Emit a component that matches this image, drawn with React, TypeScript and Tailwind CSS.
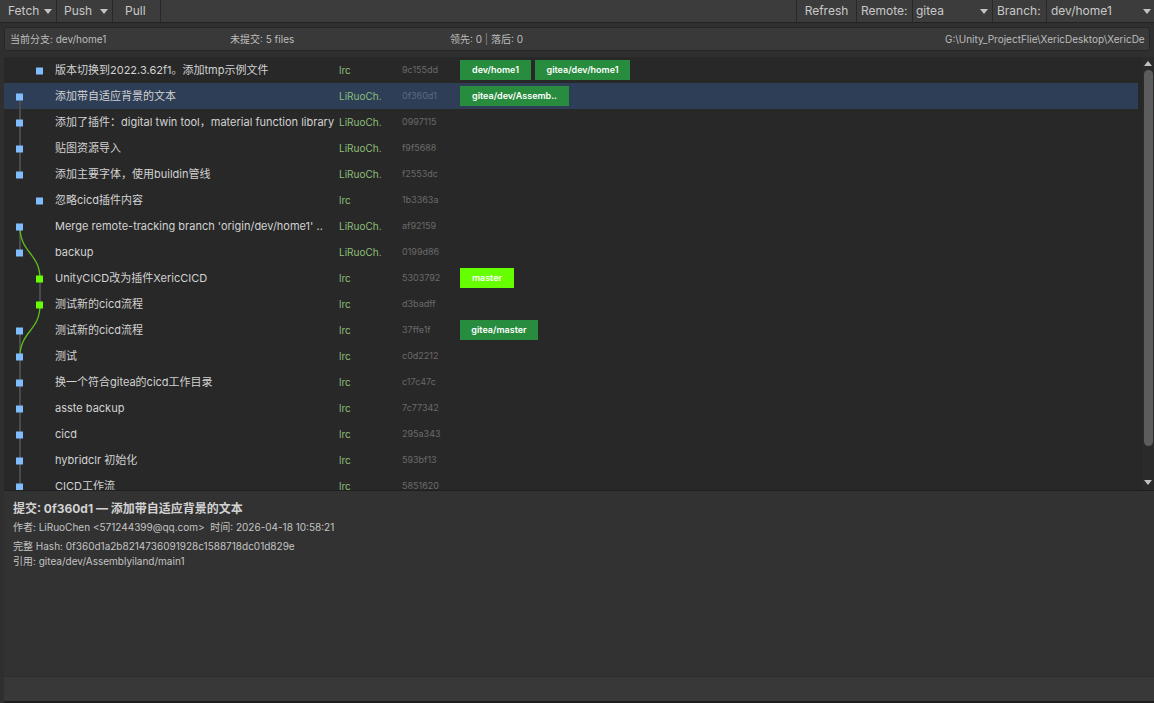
import React from 'react';

type Commit = {
    msg: string;
    author: string;
    hash: string;
    lane: 0 | 1;
    green?: boolean;
    tags?: { label: string; w: string; bright?: boolean }[];
};

const commits: Commit[] = [
    { msg: '版本切换到2022.3.62f1。添加tmp示例文件', author: 'lrc', hash: '9c155dd', lane: 1, tags: [{ label: 'dev/home1', w: 'w-[71px]' }, { label: 'gitea/dev/home1', w: 'w-[95px]' }] },
    { msg: '添加带自适应背景的文本', author: 'LiRuoCh.', hash: '0f360d1', lane: 0, tags: [{ label: 'gitea/dev/Assemb..', w: 'w-[109px]' }] },
    { msg: '添加了插件：digital twin tool，material function library', author: 'LiRuoCh.', hash: '0997115', lane: 0 },
    { msg: '贴图资源导入', author: 'LiRuoCh.', hash: 'f9f5688', lane: 0 },
    { msg: '添加主要字体，使用buildin管线', author: 'LiRuoCh.', hash: 'f2553dc', lane: 0 },
    { msg: '忽略cicd插件内容', author: 'lrc', hash: '1b3363a', lane: 1 },
    { msg: "Merge remote-tracking branch 'origin/dev/home1' ..", author: 'LiRuoCh.', hash: 'af92159', lane: 0 },
    { msg: 'backup', author: 'LiRuoCh.', hash: '0199d86', lane: 0 },
    { msg: 'UnityCICD改为插件XericCICD', author: 'lrc', hash: '5303792', lane: 1, green: true, tags: [{ label: 'master', w: 'w-[54px]', bright: true }] },
    { msg: '测试新的cicd流程', author: 'lrc', hash: 'd3badff', lane: 1, green: true },
    { msg: '测试新的cicd流程', author: 'lrc', hash: '37ffe1f', lane: 0, tags: [{ label: 'gitea/master', w: 'w-[78px]' }] },
    { msg: '测试', author: 'lrc', hash: 'c0d2212', lane: 0 },
    { msg: '换一个符合gitea的cicd工作目录', author: 'lrc', hash: 'c17c47c', lane: 0 },
    { msg: 'asste backup', author: 'lrc', hash: '7c77342', lane: 0 },
    { msg: 'cicd', author: 'lrc', hash: '295a343', lane: 0 },
    { msg: 'hybridclr 初始化', author: 'lrc', hash: '593bf13', lane: 0 },
    { msg: 'CICD工作流', author: 'lrc', hash: '5851620', lane: 0 },
];

const font = { fontFamily: "Inter, 'Noto Sans CJK SC', sans-serif" };

function Caret() {
    return (
        <svg width="8" height="5" viewBox="0 0 8 5" className="shrink-0">
            <path d="M0 0 L8 0 L4 5 Z" fill="#c4c4c4" />
        </svg>
    );
}

function Graph() {
    const cy = (i: number) => 14 + i * 26;
    const lx = (l: number) => (l === 0 ? 15.5 : 35.5);
    return (
        <svg className="absolute left-0 top-0 pointer-events-none" width="50" height="460">
            <line x1="16" y1={cy(1)} x2="16" y2={cy(4)} stroke="#4a4a4a" strokeWidth="2" />
            <line x1="16" y1={cy(6)} x2="16" y2={cy(7)} stroke="#4a4a4a" strokeWidth="2" />
            <line x1="36" y1={cy(8)} x2="36" y2={cy(9)} stroke="#4a4a4a" strokeWidth="2" />
            <line x1="16" y1={cy(10)} x2="16" y2={460} stroke="#4a4a4a" strokeWidth="2" />
            <path d={`M16 ${cy(6)} C16 ${cy(7)}, 36 ${cy(7)}, 36 ${cy(8)}`} stroke="#5fc21a" strokeWidth="1.3" fill="none" />
            <path d={`M36 ${cy(9)} C36 ${cy(10)}, 16 ${cy(10)}, 16 ${cy(11)}`} stroke="#5fc21a" strokeWidth="1.3" fill="none" />
            {commits.map((c, i) => (
                <rect key={i} x={lx(c.lane) - 3.5} y={cy(i) - 3.5} width="7" height="7" fill={c.green ? '#66ff00' : '#80bdff'} />
            ))}
        </svg>
    );
}

export default function App() {
    return (
        <div className="w-[1154px] h-[703px] bg-[#2f2f2f] flex flex-col overflow-hidden text-[#c8c8c8]" style={font}>
            {/* toolbar */}
            <div className="h-[23px] shrink-0 flex items-stretch bg-[#3c3c3c] border-b border-[#232323] text-[12px] text-[#c8c8c8]">
                <div className="w-[57px] flex items-center gap-[5px] pl-[8px] border-r border-[#282828]">Fetch <Caret /></div>
                <div className="w-[56px] flex items-center gap-[8px] pl-[7px] border-r border-[#282828]">Push <Caret /></div>
                <div className="w-[48px] flex items-center pl-[12px] border-r border-[#282828]">Pull</div>
                <div className="flex-1 border-r border-[#282828]" />
                <div className="w-[60px] flex items-center justify-center border-r border-[#282828]">Refresh</div>
                <div className="w-[56px] flex items-center pl-[4px] border-r border-[#282828]">Remote:</div>
                <div className="w-[80px] flex items-center justify-between px-[3px] pr-[4px] border-r border-[#282828]">gitea <Caret /></div>
                <div className="w-[54px] flex items-center pl-[4px] border-r border-[#282828]">Branch:</div>
                <div className="flex-1 max-w-[107px] flex items-center justify-between pl-[4px] pr-[3px]">dev/home1 <Caret /></div>
            </div>

            {/* info bar */}
            <div className="mx-[4px] mt-[4px] h-[24px] shrink-0 flex items-center rounded-[3px] bg-[#393939] border border-[#272727] text-[10px] text-[#bdbdbd] whitespace-nowrap overflow-hidden">
                <span className="w-[225px] pl-[5px] shrink-0">当前分支: dev/home1</span>
                <span className="w-[220px] shrink-0">未提交: 5 files</span>
                <span className="shrink-0">领先: 0 <span className="text-[#8a8a8a]">|</span> 落后: 0</span>
                <span className="flex-1" />
                <span className="w-[204px] shrink-0 overflow-hidden">G:\Unity_ProjectFlie\XericDesktop\XericDe</span>
            </div>

            {/* commit list */}
            <div className="mt-[6px] ml-[4px] h-[434px] shrink-0 flex bg-[#282828] border-b border-[#1f1f1f]">
                <div className="relative flex-1 overflow-hidden">
                    <Graph />
                    {commits.map((c, i) => (
                        <div
                            key={i}
                            className={`h-[26px] flex items-center mr-[3px] whitespace-nowrap ${i === 1 ? 'bg-[#2d3e56]' : ''}`}
                        >
                            <div className="w-[51px] shrink-0" />
                            <div className="w-[282px] mr-[2px] shrink-0 overflow-hidden text-[11px] text-[#d2d2d2]">{c.msg}</div>
                            <div className="w-[63px] shrink-0 text-[10px] text-[#8cbf78]">{c.author}</div>
                            <div className={`w-[58px] shrink-0 text-[9px] ${i === 1 ? 'text-[#5d6b7e]' : 'text-[#6a6a6a]'}`}>{c.hash}</div>
                            <div className="flex gap-[4px]">
                                {c.tags?.map((t) => (
                                    <div
                                        key={t.label}
                                        className={`h-[20px] flex items-center justify-center text-[9px] font-semibold text-white ${t.w} ${t.bright ? 'bg-[#66ff00]' : 'bg-[#288c3e]'}`}
                                    >
                                        {t.label}
                                    </div>
                                ))}
                            </div>
                        </div>
                    ))}
                </div>
                {/* scrollbar */}
                <div className="w-[13px] shrink-0 flex flex-col items-center bg-[#2a2a2a] border-l border-[#262626] pt-[4px] pb-[5px]">
                    <svg width="8" height="5" viewBox="0 0 8 5"><path d="M0 5 L8 5 L4 0 Z" fill="#c0c0c0" /></svg>
                    <div className="w-[9px] flex-1 mt-[4px] mb-[34px] rounded-full bg-[#5c5c5c]" />
                    <svg width="8" height="5" viewBox="0 0 8 5"><path d="M0 0 L8 0 L4 5 Z" fill="#c0c0c0" /></svg>
                </div>
            </div>

            {/* details */}
            <div className="h-[185px] shrink-0 ml-[4px] bg-[#323232] px-[9px] pt-[10px] text-[10px] text-[#c4c4c4]">
                <div className="text-[12px] font-bold text-[#d2d2d2] leading-[16px]">提交: 0f360d1 — 添加带自适应背景的文本</div>
                <div className="mt-[3px] leading-[14px]">作者: LiRuoChen &lt;571244399@qq.com&gt;&nbsp; 时间: 2026-04-18 10:58:21</div>
                <div className="mt-[5px] leading-[14px]">完整 Hash: 0f360d1a2b8214736091928c1588718dc01d829e</div>
                <div className="mt-[1px] leading-[14px]">引用: gitea/dev/Assemblyiland/main1</div>
            </div>

            {/* bottom bar */}
            <div className="flex-1 ml-[4px] bg-[#383838] border-t border-[#2c2c2c] border-b-2 border-b-[#1e1e1e]" />
        </div>
    );
}
